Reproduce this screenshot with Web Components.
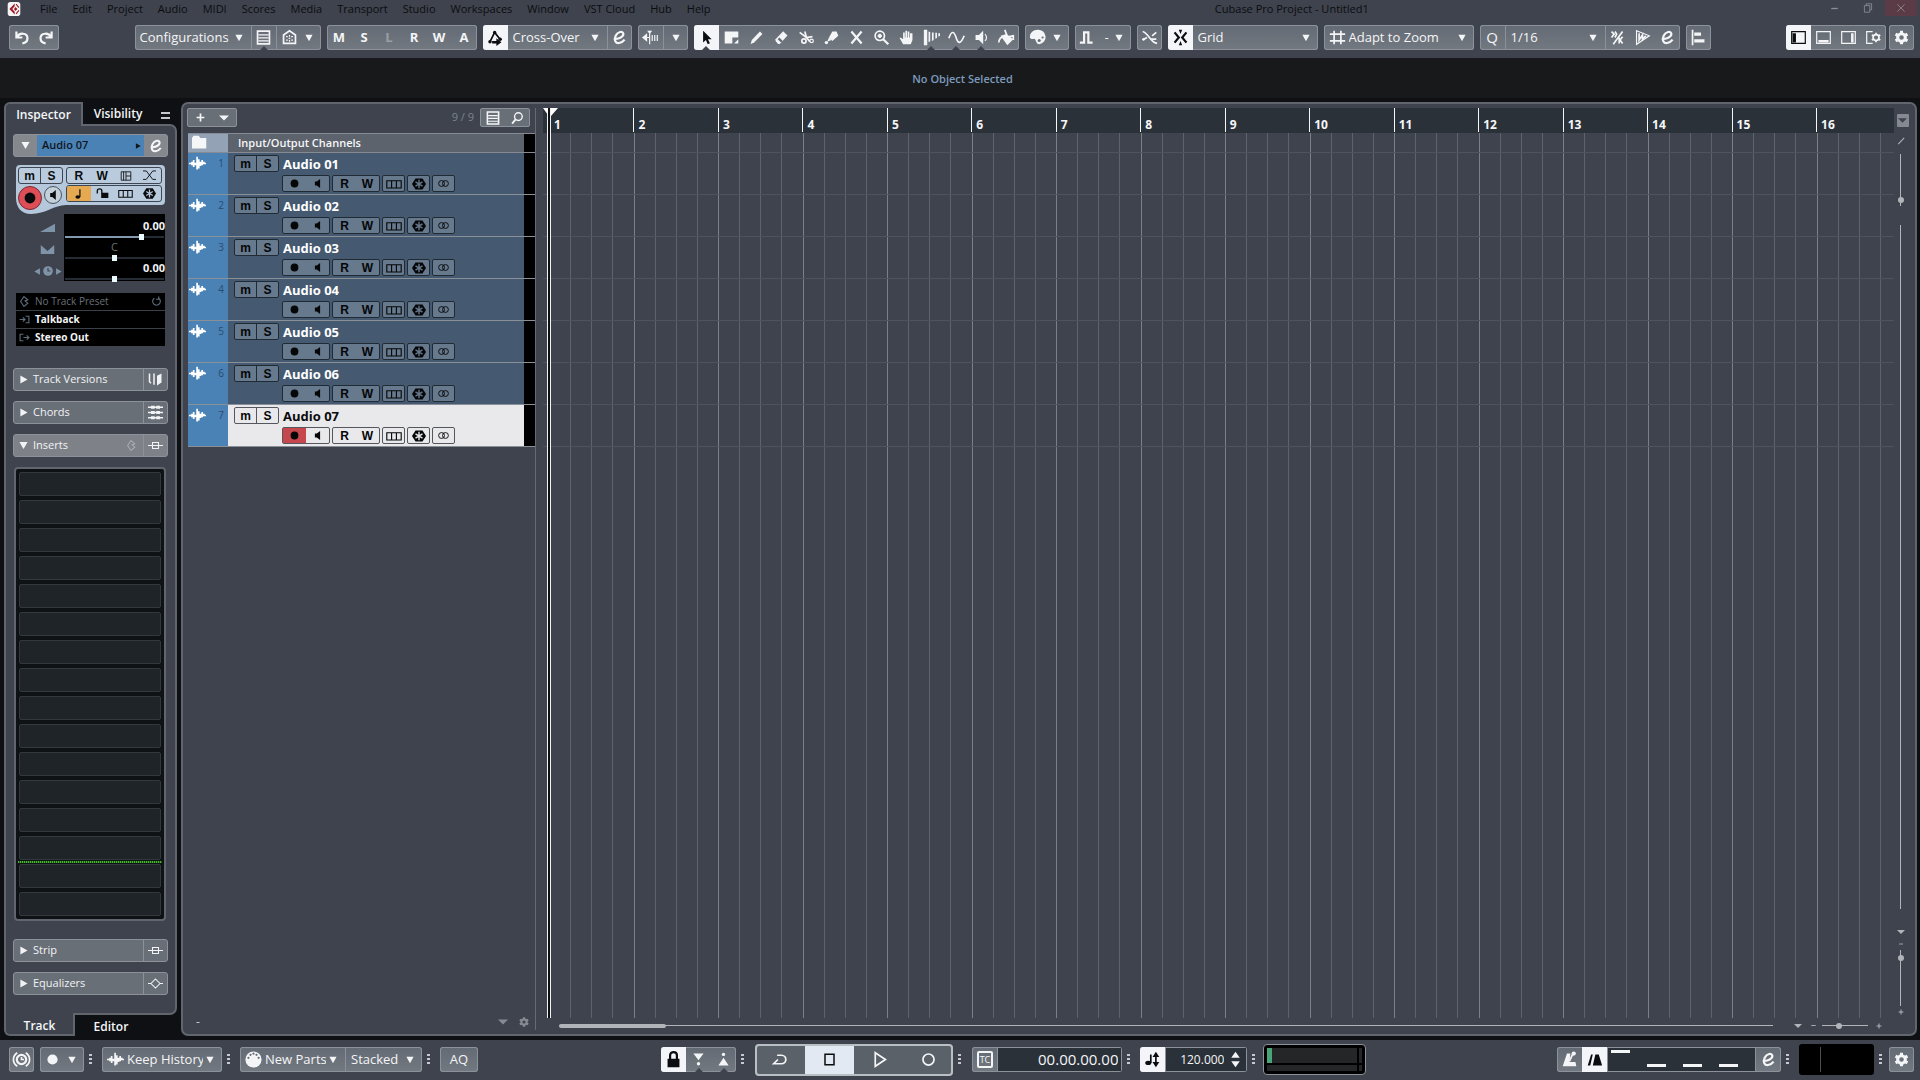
<!DOCTYPE html>
<html lang="en">
<head>
<meta charset="utf-8">
<title>Cubase Pro Project - Untitled1</title>
<style>
html,body{margin:0;height:100%}
body{background:#0e1013;overflow:hidden}
</style>
</head>
<body>
<daw-app></daw-app>
<script>
const ICONS = {
  logo:'<rect x="1" y="0" width="18" height="20" rx="4" fill="#f4f4f4"/><path d="M11 2 3.500 10 11 18V14L7.500 10 11 6Z" fill="#a01828"/><path d="M12 7l3 3-3 3-2-3z" fill="#a01828"/><path d="M13 3l4 5M13 17l4-5" stroke="#a01828" stroke-width="1.500"/>',
  undo:'<path d="M4 3v7h7M5 9.500C7 4 17 4 17 11c0 3-2 5.500-6 6" class="s25"/>',
  redo:'<path d="M16 3v7H9M15 9.500C13 4 3 4 3 11c0 3 2 5.500 6 6" class="s25"/>',
  list:'<path d="M3 2.500h14v15H3z" class="s2"/><path d="M4 7h12M4 10.500h12M4 14h12" class="s"/>',
  home:'<path d="M3 17V7l7-5 7 5v10z" class="s2"/><path d="M6 9h2M12 9h2M6 13h2M12 13h2M9 11h2M10 7v2M10 13v2" class="s"/>',
  auto:'<path d="M3 16 9 4l7 9" class="s2"/><path d="M6 14h5v-3l6 4.500-6 4.500v-3H6z" class="f"/><circle cx="9" cy="4" r="2" class="f"/><circle cx="3.500" cy="15" r="2" class="f"/><circle cx="15.500" cy="12" r="2" class="f"/>',
  edit:'<path d="M4.500 11.500C9 12 15 9 14.500 5.500 14 2 8 3 5.500 8c-2.500 5 0 9 4 8.500 3-.4 5-2 6.500-4" class="s25"/>',
  delay:'<path d="M0 10l6-5v10z" class="f"/><path d="M9 2v16M6 10h3M12 7v7M15 7v7M18 7v7" class="s"/><path d="M6 2h6l-3 4z" class="f"/>',
  arrow:'<path d="M6 2v14l3.300-3 2.200 5 2.500-1.200-2.300-4.800H16z" class="f"/>',
  range:'<path d="M2 3h16v7h-7v7H2z" class="f"/><path d="M18 12v5h-5z" class="f"/>',
  pencil:'<path d="M3 18l1.500-5L14 3l3 3-9.500 9.500z" class="f"/>',
  eraser:'<path d="M3 12 12 2.500l5 5L8 17.500H6L3 14z" class="f"/><path d="M5.500 12l4 4 2-2-4-4z" fill="#666c75"/>',
  scissors:'<path d="M2 4l8 6 7-1M8 3l2 7 4 5" class="s2"/><circle cx="7" cy="14" r="2.500" class="s2"/><circle cx="16" cy="14" r="2" class="s"/>',
  glue:'<path d="M11 3h5l2 5-7 6-4-4z" class="f"/><path d="M7 10l3 3-5 2z" class="f"/><circle cx="4" cy="16" r="2" class="f"/>',
  mute:'<path d="M4 3l12 14M16 3L4 17" class="s25"/>',
  zoom:'<circle cx="8" cy="8" r="5.500" class="s2"/><path d="M12 12l6 6M5.500 8h5M8 5.500v5" class="s25"/>',
  hand:'<path d="M6 18 2 11l1-1 3 2V4h2v6h.7V2h2v8h.7V3h2v7h.7V5H17v8l-2 5z" class="f"/>',
  comp:'<path d="M1 1h4v18H1zM6.500 3l2 .5v11l-2 1zM10.500 4h2v9l-2 1zM14.500 4.500h2v6l-2 1zM18 5h2v3l-2 1z" class="f"/>',
  curve:'<path d="M1 11C4 2 7 2 9.500 10S15 18 19 8" class="s2"/>',
  speaker:'<path d="M3 7h4l5-5v16l-5-5H3z" class="f"/><path d="M14 6c2.500 2 2.500 6 0 8" class="s"/>',
  spk:'<path d="M6 7h3l5-4v14l-5-4H6z" class="f"/>',
  paint:'<path d="M3 8 10 6l8 6-7 7z" class="f"/><path d="M8 1l3 8M1 16c0-4 2-6 5-7M13 9l5-1v5" class="s2"/>',
  palette:'<path d="M10 1a9 8 0 0 0-9 8c0 3 3 3 5 2.500S8 18 12 18a8.500 8.500 0 0 0-2-17z" class="f"/><circle cx="12" cy="13.500" r="1.800" fill="#666c75"/><circle cx="16" cy="10" r="1.300" fill="#666c75"/>',
  pulse:'<path d="M1 16h5V4h5v12h5" class="s25"/>',
  fade:'<path d="M2 3c7 2 9 13 17 14" class="s2"/><path d="M2 13l5-3M13 8l5-4M12 12h6" class="s2"/><circle cx="3" cy="12" r="1.500" class="f"/>',
  snap:'<path d="M3 4l5 6-5 6M17 4l-5 6 5 6" class="s25"/><path d="M8 1h4l-2 5zM8 19h4l-2-5z" class="f"/>',
  hash:'<path d="M6 2v16M14 2v16M1 6h18M1 14h18" class="s2"/>',
  iq:'<path d="M3 3l3 3-3 4M7 3l2 3-2 4M5 18 16 3M16 9l-3 4 3 4M12 10v7" class="s2"/>',
  ramp:'<path d="M3 2l15 6L3 18z" class="s"/><path d="M6 5v8l4-6v5l4-4" class="s2"/>',
  align:'<path d="M3 1v18" class="s2"/><path d="M5 4h8v4H5zM5 12h12v4H5z" class="f"/>',
  zoneL:'<path d="M2 3h16v14H2z" class="s"/><path d="M3 5h4v11H3z" class="f"/>',
  zoneB:'<path d="M2 3h16v14H2z" class="s"/><path d="M4 13h12v3H4z" class="f"/>',
  zoneR:'<path d="M2 3h16v14H2z" class="s"/><path d="M13 5h3v11h-3z" class="f"/>',
  zoneG:'<path d="M9 3H2v14h7" class="s"/><circle cx="13" cy="10" r="3.500" class="s2"/><path d="M13 4.500v2M13 13.500v2M8 7l2 1M16 12l2 1M8 13l2-1M16 8l2-1" class="s2"/>',
  gear:'<circle cx="10" cy="10" r="4.500" class="s3"/><path d="M10 2v3M10 15v3M3 6l3 1.700M14 12.300 17 14M3 14l3-1.700M14 7.700 17 6" class="s3"/>',
  plus:'<path d="M10 4v12M4 10h12" class="s25"/>',
  search:'<circle cx="12" cy="8" r="5.500" class="s2"/><path d="M8 12l-5 6" class="s25"/>',
  folder:'<path d="M0 4 2 1h7l2 3h8v14H0z" class="f"/>',
  wave:'<path d="M0 10h3M3.500 8v4M5.500 6v8M7.500 9v3M9.500 2v15M11.500 5v11M13.500 8v5M15.500 6v6M17.500 8v3M18 10h2" class="s2"/>',
  dot:'<circle cx="10" cy="10" r="6" class="f"/>',
  lanes:'<path d="M1 6h18v9H1zM7 6v9M13 6v9" class="s"/>',
  freeze:'<path d="M5 2h10l5 8-5 8H5l-5-8z" class="f"/><path d="M10 4v12M5 7l10 6M15 7 5 13" stroke="var(--hole,#66798d)" stroke-width="2"/>',
  stereo:'<circle cx="7" cy="10" r="4.500" class="s"/><circle cx="13" cy="10" r="4.500" class="s"/>',
  grid:'<path d="M2 3h16v14H2zM10 3v14M10 10h8" class="s"/><path d="M6 3v14" class="s"/>',
  cross:'<path d="M0 3h5L15 16h5M20 3h-5L5 16H0" class="s"/>',
  note:'<ellipse cx="8" cy="15" rx="4" ry="3" class="f"/><path d="M11.500 15V2" class="s2"/>',
  unlock:'<path d="M8 9h11v8H8z" class="f"/><path d="M2 10V6c0-4 7-4 7 0v4" class="s2"/>',
  lock:'<path d="M3 9h14v10H3z" class="f"/><path d="M6 10V5c0-5 8-5 8 0v5" class="s25"/>',
  vol:'<path d="M0 16h20V5z" class="f"/>',
  pan:'<path d="M1 4l9 8 9-8v12H1z" class="f"/>',
  clock:'<circle cx="10" cy="10" r="8" class="f"/><path d="M10 5v5h4" stroke="#3e434d" stroke-width="2" fill="none"/>',
  preset:'<path d="M9 1 3 10l6 9 7-6-5-4 5-2z" class="s2"/>',
  reload:'<path d="M14 4a7 7 0 1 1-8 0M14 1v5H9" class="s2"/>',
  input:'<path d="M1 10h9M7 6l4 4-4 4M12 4h6v12h-6" class="s2"/>',
  output:'<path d="M8 4H2v12h6M8 10h10M14 6l4 4-4 4" class="s2"/>',
  versions:'<path d="M2 2v11l2 2M8 2v15" class="s2"/><path d="M12 5l6-3v12l-6 4z" class="f"/>',
  chords:'<path d="M0 3h20M0 10h20M0 17h20" class="s2"/><path d="M4 1h5v4H4zM11 1h5v4h-5zM4 8h5v4H4zM11 8h5v4h-5zM4 15h5v4H4zM11 15h5v4h-5z" class="f"/>',
  insert:'<path d="M0 10h20M6 6h8v8H6z" class="s"/>',
  eq:'<path d="M0 10h4M16 10h4M10 4l6 6-6 6-6-6z" class="s"/>',
  shared:'<path d="M5 2C-1 6-1 14 5 18M15 2c6 4 6 12 0 16" class="s2"/><circle cx="10" cy="10" r="5.500" class="s25"/><path d="M10 7v3h3" class="s2"/>',
  midi:'<circle cx="10" cy="10" r="9.500" class="f"/><g fill="#666c75"><circle cx="4" cy="8" r="1.300"/><circle cx="6.500" cy="4.500" r="1.300"/><circle cx="10" cy="3.200" r="1.300"/><circle cx="13.500" cy="4.500" r="1.300"/><circle cx="16" cy="8" r="1.300"/></g>',
  punchIn:'<path d="M4 3h12l-6 8z" class="f"/><circle cx="10" cy="15" r="2" class="f"/>',
  punchOut:'<circle cx="10" cy="4" r="2" class="f"/><path d="M4 17h12l-6-9z" class="f"/>',
  cycle:'<path d="M6 5h5c7 0 7 10 0 10H2l5-5" class="s2"/>',
  stop:'<path d="M4 3h12v14H4z" class="s2"/>',
  play:'<path d="M5 2l12 8-12 8z" class="s2"/>',
  rec:'<circle cx="10" cy="10" r="6.500" class="s2"/>',
  tempo:'<ellipse cx="5" cy="14" rx="3.500" ry="2.500" class="f"/><path d="M8 14V4M14 4v12" class="s2"/><path d="M10 7l4-6 4 6zM10 13l4 6 4-6z" class="f"/>',
  spin:'<path d="M5 8l5-7 5 7zM5 12l5 7 5-7z" class="f"/>',
  metro:'<path d="M7 3h4L10 13h7l1 5H2z" class="f"/><path d="M10 12l4-9" class="s2"/><circle cx="15" cy="3" r="2.500" class="f"/>',
  count:'<path d="M2 17 6 4h2L5 17zM11 4h4l4 13H8z" class="f"/>',
  min:'<path d="M5 10h10" class="s2"/>',
  restore:'<path d="M7 6V3h9v10h-3M4 6h9v11H4z" class="s"/>',
  close:'<path d="M4 4l12 12M16 4 4 16" class="s"/>',
  drop:'<path d="M1 2h18l-9 16z" class="f"/>',
  dropw:'<path d="M0 5h20l-10 10z" class="f"/>',
  right:'<path d="M3 1v18l16-9z" class="f"/>',
  left:'<path d="M17 1v18L1 10z" class="f"/>',
  slash:'<path d="M3 18 18 2" class="s25"/>'
};
const BASE = `*{box-sizing:border-box}:host{display:block;box-sizing:border-box}
button,select,input{font:inherit;color:inherit;background:none;border:0;margin:0;padding:0;min-width:0;outline:0;appearance:none}
button{display:flex;align-items:center;justify-content:center}`;
const ic = (n, s = 17) => `<daw-icon name="${n}" size="${s}"></daw-icon>`;
function component(name, css, render) {
  customElements.define(name, class extends HTMLElement {
    constructor() { super(); this.attachShadow({ mode: 'open' }); }
    connectedCallback() {
      if (this.shadowRoot.childNodes.length) return;
      this.shadowRoot.innerHTML = `<style>${BASE}${css}</style>` + render(this, (a, d = '') => this.getAttribute(a) ?? d);
    }
  });
}

component('daw-icon', `:host{display:inline-block;flex:none;line-height:0}svg{display:block;fill:none;overflow:visible}
.f{fill:currentColor}.s,.s2,.s25,.s3{stroke:currentColor;fill:none;stroke-width:1.400}.s2{stroke-width:2}.s25{stroke-width:2.600}.s3{stroke-width:3.600}`,
  (el, a) => `<svg viewBox="0 0 20 20" width="${a('size', 17)}" height="${a('size', 17)}" aria-hidden="true">${ICONS[a('name')]}</svg>`);

component('daw-group', `:host{display:flex;flex:none;height:25px;border-radius:3px;background:linear-gradient(#646a73,#737981);box-shadow:inset 0 0 0 1px #8d929a;overflow:hidden;color:#f4f5f7}`,
  () => `<slot></slot>`);

component('daw-btn', `:host{flex:none;width:25px;position:relative}:host([sep]){border-left:1px solid #8d929a}
button{width:100%;height:100%;gap:7px;font-weight:700}
:host([on]){background:#f4f5f9;color:#0c0d10}:host([dim]){color:#9a9fa6}
:host([wide]){width:44px}:host([wide]) button{padding-right:4px}
:host([notch])::after{content:"";position:absolute;bottom:0;left:50%;margin-left:-4px;border:4px solid transparent;border-top:0;border-bottom:4px solid #3e434d}`,
  (el, a) => `<button aria-label="${a('label')}">${a('icon') ? ic(a('icon')) : ''}<slot></slot>${el.hasAttribute('wide') ? ic('drop', 8) : ''}</button>`);

component('daw-select', `:host{flex:none;width:var(--w,100px)}:host([sep]){border-left:1px solid #8d929a}
label{display:flex;align-items:center;height:100%;padding:0 8px 0 5px;gap:4px}select{flex:1;height:100%;font-size:13px}:host([icon]) label{gap:3px}`,
  (el, a) => `<label>${a('icon') ? ic(a('icon')) : ''}<select aria-label="${a('label')}"><option>${a('value')}</option></select>${ic('drop', 8)}</label>`);

component('daw-dots', `:host{flex:none;width:18px;padding-left:5px;display:flex;align-items:center}
i{width:3px;height:12px;background:repeating-linear-gradient(#c6cad0 0 2px,transparent 2px 4px)}`, () => '<i></i>');

component('daw-menu', `:host{display:flex;height:18px;align-items:center;padding:0 3px 0 7px;font-size:11px;color:#0c0d10}
nav{display:flex;gap:15px;margin-left:19px;flex:15}.end{flex:7;display:flex;justify-content:flex-end;gap:20px;height:16px;color:#8b8f96;margin-bottom:2px}
.end button{width:13px}.end .x{width:32px;margin-left:-9px;background:#5b3b46}`,
  () => `${ic('logo', 14)}<nav>${['File','Edit','Project','Audio','MIDI','Scores','Media','Transport','Studio','Workspaces','Window','VST Cloud','Hub','Help'].map(t => `<button>${t}</button>`).join('')}</nav>
<span>Cubase Pro Project - Untitled1</span><div class="end"><button aria-label="Minimize">${ic('min',13)}</button><button aria-label="Restore">${ic('restore',12)}</button><button class="x" aria-label="Close">${ic('close',12)}</button></div>`);

const btn = (icon, label, x = '') => `<daw-btn icon="${icon}" label="${label}" ${x}></daw-btn>`;
component('daw-toolbar', `:host{display:flex;gap:6px;height:40px;padding:7px 6px 8px 9px;font-size:13px}i{flex:1;margin-right:-6px}`,
  () => `<daw-group>${btn('undo','Undo')}${btn('redo','Redo')}</daw-group><i></i>
<daw-group><daw-select label="Configurations" value="Configurations" style="--w:116px"></daw-select>${btn('list','Lists','sep notch')}${btn('home','Workspaces','sep wide style="width:45px"')}</daw-group>
<daw-group>${['M','S','L','R','W','A'].map(c => `<daw-btn label="${c}" ${c === 'L' ? 'dim' : ''}>${c}</daw-btn>`).join('')}</daw-group>
<daw-group>${btn('auto','Automation','on')}<daw-select label="Automation mode" value="Cross-Over" style="--w:99px"></daw-select>${btn('edit','Edit','sep')}</daw-group>
<daw-group>${btn('delay','Delay compensation')}<daw-btn sep label="More"><daw-icon name="drop" size="8"></daw-icon></daw-btn></daw-group>
<daw-group>${btn('arrow','Select','on notch')}${['range','pencil','eraser','scissors','glue','mute','zoom','hand'].map(n => btn(n, n)).join('')}${btn('comp','Comp','notch')}${btn('curve','Curve','notch')}${btn('speaker','Play','notch')}${btn('paint','Colour')}</daw-group>
<daw-group>${btn('palette','Palette','wide')}</daw-group>
<daw-group>${btn('pulse','Nudge')}<daw-select label="Nudge" value="-" style="--w:31px"></daw-select></daw-group>
<daw-group>${btn('fade','Crossfade')}</daw-group>
<daw-group>${btn('snap','Snap','on')}<daw-select label="Snap type" value="Grid" style="--w:125px"></daw-select></daw-group>
<daw-group><daw-select label="Grid type" icon="hash" value="Adapt to Zoom" style="--w:150px"></daw-select></daw-group>
<daw-group><daw-btn label="Quantize"><span style="font-size:15px;font-weight:400">Q</span></daw-btn><daw-select sep label="Quantize preset" value="1/16" style="--w:100px"></daw-select>${btn('iq','Iterative','sep')}${btn('ramp','Soft')}${btn('edit','Edit quantize')}</daw-group>
<daw-group>${btn('align','Align')}</daw-group><i></i>
<daw-group>${btn('zoneL','Left zone','on')}${btn('zoneB','Lower zone')}${btn('zoneR','Right zone')}${btn('zoneG','Zone setup')}</daw-group>
<daw-group style="margin-left:-3px">${btn('gear','Setup')}</daw-group>`);

component('daw-info', `:host{height:44px;background:#18191b;border-bottom:4px solid #0e1013;display:flex;align-items:center;justify-content:center;padding:2px 0 0 5px;font-size:11px;font-weight:600;color:#7d9bbb}`, () => `<span>No Object Selected</span>`);

/* one collapsible header of the inspector */
component('daw-section', `:host{display:flex;flex:none;height:23px;border:1px solid #8d929a;border-radius:3px;background:#696f77;color:#f2f3f5;font-size:11px;margin-bottom:10px}
:host([open]){background:#7e8288}.m{flex:1;padding:0 6px 0 5px;gap:5px}span{flex:1;text-align:left}.x{width:24px;border-left:1px solid #8d929a}`,
  (el, a) => { const o = el.hasAttribute('open'); return `<button class="m">${ic(o ? 'drop' : 'right', 9)}<span>${a('title')}</span>${o ? `<daw-icon name="preset" size="11" style="color:#a6abb1"></daw-icon>` : ''}</button><button class="x" aria-label="${a('title')} bypass">${ic(a('icon'), 15)}</button>`; });

component('daw-channel', `:host{position:relative;margin:8px 3px 0;height:49px;padding:2px;color:#0a0b0d;--hole:#b5c7da}
svg.bg{position:absolute;inset:0;z-index:0}
.g{position:relative;display:grid;grid-template-columns:45px 96px;gap:1px 3px;grid-template-rows:17px 17px}
.b{display:flex;border:1px solid #3d4652;border-radius:3px;background:#b9cbdd;overflow:hidden;font:700 12px "Liberation Sans",sans-serif}.b button{flex:1}.b button+button.d{border-left:1px solid #3d4652}
.c{display:flex;gap:2px;padding-top:1px}.r{flex:none;width:24px;height:24px;border-radius:50%;border:1px solid #7a2a33;background:#dd4e56}.p{flex:none;width:18px;height:18px;border-radius:50%;border:1px solid #4a525c;background:#c3cfda}.n{background:#e4a951}`,
  () => `<svg class="bg" width="149" height="49" aria-hidden="true"><path d="M0 4Q0 0 4 0H145Q149 0 149 4V36Q149 40 145 40H50C38 40 30 49 15 49 5 49 0 42 0 33Z" fill="#b5c7da"/></svg>
<div class="g"><div class="b"><button>m</button><button class="d">S</button></div><div class="b"><button>R</button><button>W</button><button aria-label="Lanes">${ic('grid',12)}</button><button aria-label="Crossfade">${ic('cross',13)}</button></div>
<div class="c"><button class="r" aria-label="Record">${ic('dot',18)}</button><button class="p" aria-label="Monitor">${ic('spk',14)}</button></div>
<div class="b"><button class="n" aria-label="Musical">${ic('note',12)}</button><button aria-label="Lock">${ic('unlock',13)}</button><button aria-label="Lane display">${ic('lanes',15)}</button><button aria-label="Freeze">${ic('freeze',13)}</button></div></div>`);

component('daw-values', `:host{display:flex;margin:2px 3px 0;color:#7f94a8;justify-content:flex-end}
.l{display:grid;grid-template-rows:repeat(3,22px);padding-top:2px;width:33px;justify-items:center}.l div{display:flex;align-items:center;gap:1px}
.v{width:101px;background:#000;padding-top:5px;height:67px}.v div{height:14px;font-size:11px;line-height:14px;font-weight:700;color:#f2f3f5;text-align:right}.v .m{text-align:center;font-weight:400;color:#6b7078}
input{display:block;width:99px;height:7px;margin:0 1px;background:linear-gradient(to right,var(--c,#252c35) 77%,#252c35 77%) center/100% 2px no-repeat}
input::-webkit-slider-thumb{appearance:none;width:5px;height:6px;background:#e9fbff}`,
  () => `<div class="l"><div>${ic('vol',15)}</div><div>${ic('pan',15)}</div><div>${ic('left',7)}${ic('clock',12)}${ic('right',7)}</div></div>
<div class="v"><div>0.00</div><input type="range" aria-label="Volume" value="79" style="--c:#8299b0"><div class="m">C</div><input type="range" aria-label="Pan" value="50"><div>0.00</div><input type="range" aria-label="Delay" value="50"></div>`);

component('daw-routing', `:host{margin:11px 3px 22px;background:#000;color:#5f6e7d}
button{width:100%;height:18px;justify-content:flex-start;gap:5px;padding:0 3px;font-size:10px;border-bottom:1px solid #3b4149}button:last-child{border:0;height:17px}span{flex:1;text-align:left;color:#f2f3f5;font-weight:700}.o{color:#6b7078;font-weight:400}`,
  () => `<button>${ic('preset',11)}<span class="o">No Track Preset</span>${ic('reload',11)}</button><button>${ic('input',11)}<span>Talkback</span></button><button>${ic('output',11)}<span>Stereo Out</span></button>`);

component('daw-slots', `:host{position:relative;margin:0 2px 18px 1px;border:2px solid #61666e;border-radius:4px;background:#0f1214;padding:3px;display:grid;grid-auto-rows:24px;gap:4px}
div{border:1px solid #33383d;border-radius:2px;background:#1f2428}i{position:absolute;left:2px;right:2px;top:392px;height:2px;background:repeating-linear-gradient(to right,#49b52f 0 1px,#1d5a19 1px 2px)}`,
  () => '<div></div>'.repeat(16) + '<i></i>');

component('daw-inspector', `:host{display:flex;flex-direction:column;flex:none;width:173px;color:#f5f6f8;font-size:12px}
.t,.u{display:flex;position:relative;font-weight:600}.t{height:24px;margin-bottom:-2px}.u{height:23px;margin-top:-2px}.u button{padding-top:5px}
.a{background:#3e434d;border:2px solid #61666e}.t .a{width:79px;border-bottom:0;border-radius:6px 0 0 0}.u .a{width:71px;border-top:0;border-radius:0 0 0 6px}
.t button+button{width:70px}.u button+button{width:72px}.t button.h{width:24px;color:#c5c9cf}
.h::before{content:"";width:9px;height:3px;border:solid currentColor;border-width:2px 0;margin-top:3px}
.b{flex:1;border:2px solid #61666e;border-radius:0 7px 7px 0;background:#3e434d;padding:8px 7px;display:flex;flex-direction:column;min-height:0}
.n{display:flex;height:23px;flex:none;border-radius:3px;border:1px solid #8d929a;background:#85888c;overflow:hidden}.n>button{width:23px}.n .m{flex:1;background:#4a82b6;color:#10151c;justify-content:space-between;padding:0 3px 0 5px;font-size:11px;font-weight:600}`,
  () => `<div class="t"><button class="a">Inspector</button><button>Visibility</button><button class="h" aria-label="Tabs"></button></div>
<div class="b"><div class="n"><button aria-label="Collapse">${ic('drop',9)}</button><button class="m">Audio 07${ic('right',6)}</button><button aria-label="Edit channel">${ic('edit',16)}</button></div>
<daw-channel></daw-channel><daw-values></daw-values><daw-routing></daw-routing>
<daw-section title="Track Versions" icon="versions"></daw-section><daw-section title="Chords" icon="chords"></daw-section><daw-section open title="Inserts" icon="insert"></daw-section>
<daw-slots></daw-slots><daw-section title="Strip" icon="insert"></daw-section><daw-section title="Equalizers" icon="eq"></daw-section></div>
<div class="u"><button class="a">Track</button><button>Editor</button></div>`);

component('daw-track', `:host{display:flex;height:42px;background:#455a71;color:#fff;--hole:#66798d;--f:#66798d;--l:#202a35;border-bottom:1px solid #8a9097}
:host([selected]){background:#e9e9eb;color:#0a0b0d;--hole:#e9e9eb;--f:#e9e9eb;--l:#54585e}
.k{width:40px;background:#4a82b6;display:flex;justify-content:space-between;padding:2px 4px 0 1px;color:#fff;font-size:10px}.k span{color:#2a4b6c;line-height:17px}
.c{flex:1;padding:2px 0 0 6px}.m{width:11px;background:#000}
.r,.q{display:flex;height:17px;gap:2px;align-items:center}.q{margin:3px 0 0 48px}strong{font-size:13px;line-height:17px;padding-top:2px;margin-left:2px}
.b{display:flex;height:17px;border:1px solid var(--l);border-radius:2px;background:var(--f);color:#050607;font:700 12px "Liberation Sans",sans-serif}.b button{flex:1}.ms{width:45px}.ms button+button{border-left:1px solid var(--l)}.w2{width:48px}.w1{width:23px}
:host([selected]) .red{background:#c6484e}`,
  (el, a) => `<div class="k">${ic('wave',17)}<span>${a('n')}</span></div><div class="c"><div class="r"><div class="b ms"><button>m</button><button>S</button></div><strong>Audio 0${a('n')}</strong></div>
<div class="q"><div class="b w2"><button class="red" aria-label="Record enable">${ic('dot',13)}</button><button aria-label="Monitor">${ic('spk',13)}</button></div><div class="b w2"><button>R</button><button>W</button></div><div class="b w1"><button aria-label="Lanes">${ic('lanes',16)}</button></div><div class="b w1"><button aria-label="Freeze">${ic('freeze',14)}</button></div><div class="b w1"><button aria-label="Channel">${ic('stereo',13)}</button></div></div></div><div class="m"></div>`);

component('daw-tracklist', `:host{display:flex;flex-direction:column;flex:none;width:353px;margin:4px 0;border-right:1px solid #656a73}
.h{display:flex;align-items:center;height:25px;padding:0 5px 6px 4px;gap:6px;color:#7d838c;font-size:11px}.h span{flex:1;text-align:right}.x{display:flex;width:50px;height:19px;border:1px solid #8d929a;border-radius:2px;background:#696f77;color:#f5f6f8}.x button{flex:1}
.l{margin-left:5px}.io{display:flex;height:20px;background:#5d636d;border:solid #868b93;border-width:1px 0;color:#f5f6f8;font-size:11px;font-weight:600}.io div{width:40px;background:#93a2b4;padding:1px 4px}.io span{flex:1;padding-left:10px;line-height:18px}.io i{width:11px;background:#000}
.e{margin-top:auto;height:16px;display:flex;align-items:center;gap:10px;padding:0 5px 0 13px;color:#868b93;font-size:12px}.e span{flex:1;color:#c9ccd1}`,
  () => `<div class="h"><div class="x"><button aria-label="Add track">${ic('plus',13)}</button><button aria-label="Presets">${ic('dropw',10)}</button></div><span>9 / 9</span><div class="x"><button aria-label="Agents">${ic('list',16)}</button><button aria-label="Find">${ic('search',14)}</button></div></div>
<div class="l"><div class="io"><div>${ic('folder',15)}</div><span>Input/Output Channels</span><i></i></div>${[1,2,3,4,5,6,7].map(n => `<daw-track n="${n}" ${n === 7 ? 'selected' : ''}></daw-track>`).join('')}</div>
<div class="e"><span>-</span>${ic('dropw',10)}${ic('gear',12)}</div>`);

component('daw-arrange', `:host{flex:1;display:flex;flex-direction:column;margin:4px 0 0 7px;min-width:0;position:relative}
.r{display:flex;height:25px;flex:none;background:#2b3139;padding-left:6px;color:#f5f6f8;font-size:12px;font-weight:700}.r div{flex:12 1 0;border-left:1px solid #f5f6f8;padding:8px 0 0 4px;line-height:17px;height:24px;min-width:0}.r div:last-child{flex-grow:11}
.g{flex:1;display:flex;padding-left:6px}
.g div{flex:3 1 0;border-left:1px solid #5d636c}.g div:nth-of-type(4n+1){border-color:#7b8088}.g div:last-child{flex-grow:2}
.w{position:absolute;left:0;right:0;top:44px;height:295px;background:repeating-linear-gradient(#4e545e 0 1px,transparent 1px 42px)}
.p{position:absolute;left:4px;top:0;bottom:16px;width:4px;border:solid #f2f2f2;border-width:0 1px;background:#0e1013}.p svg{position:absolute;left:-5px;top:0}
.s{height:16px;flex:none;display:flex;align-items:center;padding:0 11px 1px 16px;color:#b1b4b9;gap:7px}.bar{flex:1;margin-right:14px;height:4px;background:linear-gradient(#b1b4b9,#b1b4b9) center/100% 1px no-repeat}.bar i{display:block;width:107px;height:4px;border-radius:2px;background:#b1b4b9}
input{width:46px;height:9px;margin-left:-3px;background:linear-gradient(#b1b4b9,#b1b4b9) center/100% 1px no-repeat}input::-webkit-slider-thumb{appearance:none;width:6px;height:6px;border-radius:3px;background:#b1b4b9}`,
  () => `<div class="r">${Array.from({length:16},(_, i) => `<div>${i + 1}</div>`).join('')}</div><div class="g">${'<div></div>'.repeat(64)}</div><div class="w"></div>
<div class="p"><svg width="15" height="8" aria-hidden="true"><path d="M0 0H5V7ZM8 0H15L8 8Z" fill="#fff"/></svg></div>
<div class="s"><div class="bar"><i></i></div>${ic('dropw',8)}${ic('min',9)}<input type="range" aria-label="Horizontal zoom" value="35">${ic('plus',8)}</div>`);

component('daw-vzoom', `:host{flex:none;width:21px;display:flex;flex-direction:column;align-items:center;padding:10px 8px 18px 0;color:#b1b4b9}
.d{width:12px;height:13px;border-radius:1px;background:#858a92;color:#3e434d;flex:none;margin:0 0 10px 4px}.d+daw-icon{margin-bottom:9px}
input{writing-mode:vertical-lr;width:9px;height:52px;flex:none;background:linear-gradient(#b1b4b9,#b1b4b9) center/1px 100% no-repeat}input::-webkit-slider-thumb{appearance:none;width:6px;height:6px;border-radius:3px;background:#b1b4b9}
.l{flex:1;width:1px;background:#b1b4b9;margin:19px 0}.z{height:56px;margin:2px 0}`,
  () => `<button class="d" aria-label="Zoom presets">${ic('dropw',9)}</button>${ic('slash',8)}<input type="range" aria-label="Waveform zoom" value="93"><div class="l"></div>${ic('dropw',8)}<span style="height:4px"></span>${ic('min',8)}<input class="z" type="range" aria-label="Vertical zoom" value="10">${ic('plus',8)}`);

component('daw-meter', `:host{flex:none;width:103px;height:31px;border:1px solid #8d929a;border-radius:4px;background:#000;padding:3px;display:grid;grid-template:15px 1fr/1fr 3px;gap:2px}div{background:#252628}.g{border-left:5px solid #47a578}`,
  () => `<div class="g"></div><div></div><div></div><div></div>`);

component('daw-transport', `:host{display:flex;flex:none;align-items:center;height:40px;padding:0 6px 1px 9px;background:#3e434d;color:#f4f5f7;font-size:13px}
.f1{flex:26}.f2{flex:27}.big{display:flex;flex:none;width:198px;height:32px;box-shadow:inset 0 0 0 2px #b9c0c4;border-radius:4px;background:#5b6168;padding:2px 0}.big button{flex:1}.big .on{background:#e3e9f2;color:#0c0d10}
.in{background:#2b3139;box-shadow:inset 0 0 0 1px #8d929a;display:flex;align-items:center}input{width:100%;height:100%;text-align:right;padding:0 4px}.tc input{font-size:15px;width:125px;padding-bottom:1px}.tp input{width:69px;font-size:12px;padding-right:10px}
.tcb{border:2px solid;font-size:9px;font-weight:400;line-height:13px;padding:0 1px;border-radius:2px}.cl{width:149px;gap:17px;padding-left:4px;align-items:end;padding-bottom:5px}.cl i{width:19px;height:3px;background:#f5f6f8}.cl i:first-child{margin-bottom:14px}
.tp .in button{width:13px;margin-left:-5px;margin-right:5px}
.scr{width:75px;height:31px;background:linear-gradient(#4c4e52,#4c4e52) 21px 3px/1px 25px no-repeat #000;border-radius:3px}`,
  () => `<daw-group>${btn('shared','Audio performance')}</daw-group><daw-group style="margin-left:6px">${btn('dot','Record mode','wide')}</daw-group><daw-dots></daw-dots>
<daw-group><daw-select icon="wave" label="History" value="Keep History" style="--w:120px"></daw-select></daw-group><daw-dots></daw-dots>
<daw-group><daw-select icon="midi" label="MIDI record" value="New Parts" style="--w:105px"></daw-select><daw-select sep label="Cycle record" value="Stacked" style="--w:77px"></daw-select></daw-group><daw-dots></daw-dots>
<daw-group><daw-btn label="Auto quantize" style="width:38px"><span style="font-weight:400">AQ</span></daw-btn></daw-group><span class="f1"></span>
<daw-group>${btn('lock','Lock punch','on')}${btn('punchIn','Punch in','notch')}${btn('punchOut','Punch out','notch')}</daw-group><daw-dots style="width:19px"></daw-dots>
<div class="big"><button aria-label="Cycle">${ic('cycle')}</button><button class="on" aria-label="Stop">${ic('stop',15)}</button><button aria-label="Play">${ic('play')}</button><button aria-label="Record">${ic('rec')}</button></div><daw-dots style="width:19px"></daw-dots>
<daw-group class="tc"><daw-btn label="Time format"><span class="tcb">TC</span></daw-btn><div class="in"><input aria-label="Position" value="00.00.00.00"></div></daw-group><daw-dots></daw-dots>
<daw-group class="tp">${btn('tempo','Tempo track','on')}<div class="in"><input aria-label="Tempo" value="120.000"><button aria-label="Step">${ic('spin',17)}</button></div></daw-group><daw-dots style="width:16px"></daw-dots>
<daw-meter></daw-meter><span class="f2"></span>
<daw-group>${btn('metro','Metronome')}${btn('count','Count in','on')}<div class="in cl"><i></i><i></i><i></i><i></i></div>${btn('edit','Click setup')}</daw-group><daw-dots></daw-dots><div class="scr"></div><daw-dots style="margin-right:-3px"></daw-dots><daw-group>${btn('gear','Transport setup')}</daw-group>`);

component('daw-app', `:host{display:flex;flex-direction:column;height:100vh;background:#0e1013;font-family:"Open Sans","Noto Sans",sans-serif;line-height:1.3}
header{background:#3e434d}main{flex:1;display:flex;gap:4px;min-height:0;padding:0 3px 4px 4px}.p{flex:1;display:flex;min-width:0;border:2px solid #61666e;border-radius:7px;background:#3e434d}`,
  () => `<header><daw-menu></daw-menu><daw-toolbar></daw-toolbar></header><daw-info></daw-info><main><daw-inspector></daw-inspector><div class="p"><daw-tracklist></daw-tracklist><daw-arrange></daw-arrange><daw-vzoom></daw-vzoom></div></main><daw-transport></daw-transport>`);
</script>
</body>
</html>
